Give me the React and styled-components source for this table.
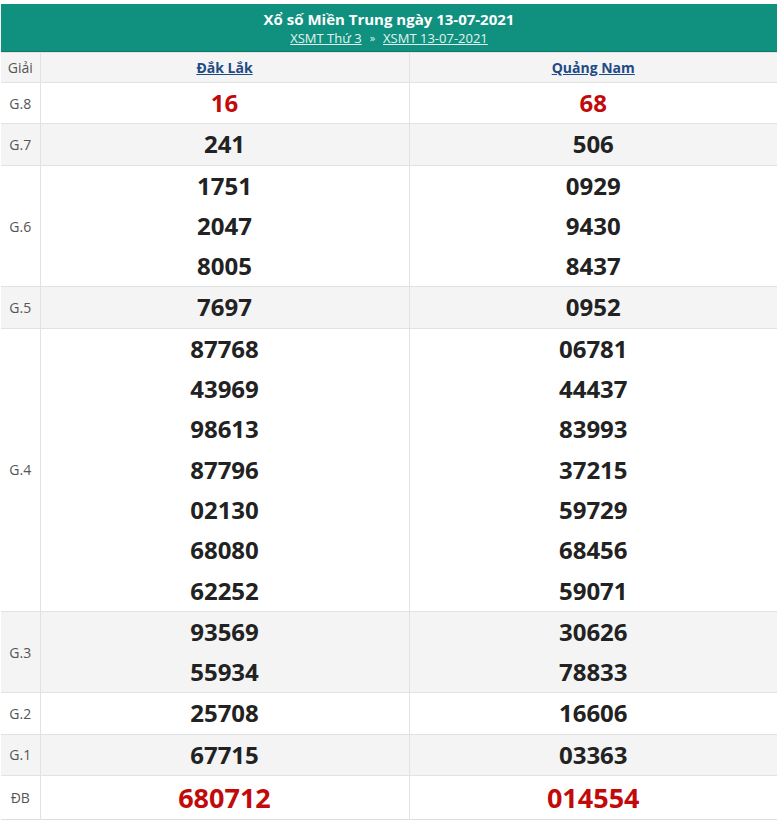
import React from 'react';
import styled, { createGlobalStyle } from 'styled-components';

const Global = createGlobalStyle`
    body {
        margin: 0;
        background: #ffffff;
        font-family: "Open Sans", "Noto Sans", sans-serif;
    }
`;

const Wrap = styled.div`
    width: 776px;
    margin: 4px 0 0 1px;
`;

const Head = styled.div`
    height: 48px;
    background-color: #10907e;
    border-bottom: 1px solid #0c7a6a;
    box-sizing: border-box;
    display: flex;
    flex-direction: column;
    align-items: center;
    justify-content: center;
    color: #ffffff;
`;

const Title = styled.h2`
    margin: 0;
    font-size: 15px;
    font-weight: 700;
    line-height: 20px;
`;

const Crumbs = styled.div`
    font-size: 13px;
    line-height: 18px;
    color: #e4f3f0;
    display: flex;
    gap: 8px;
    align-items: center;
`;

const CrumbLink = styled.a`
    color: #e4f3f0;
    text-decoration: underline;
`;

const Sep = styled.span`
    font-size: 11px;
`;

const Table = styled.table`
    width: 100%;
    border-collapse: collapse;
    table-layout: fixed;
    border-bottom: 1px solid #dedede;
`;

const Col = styled.col`
    width: ${p => p.$w}px;
`;

const Row = styled.tr`
    background-color: ${p => (p.$shade ? '#f4f4f4' : '#ffffff')};
    border-top: 1px solid #e2e2e2;
`;

const Label = styled.td`
    text-align: center;
    font-size: 14px;
    font-weight: 400;
    color: #555555;
    padding: 0;
    border-right: 1px solid #e2e2e2;
`;

const HeadCell = styled.th`
    height: 29px;
    padding: 0;
    font-size: 14px;
    font-weight: 700;
    text-align: center;
    border-right: 1px solid #e2e2e2;
    &:last-child {
        border-right: none;
    }
`;

const Province = styled.a`
    color: #224a86;
    text-decoration: underline;
`;

const Cell = styled.td`
    padding: 0;
    text-align: center;
    border-right: 1px solid #e2e2e2;
    &:last-child {
        border-right: none;
    }
`;

const Num = styled.div`
    font-size: ${p => (p.$big ? '27px' : '24px')};
    line-height: ${p => (p.$big ? '43px' : '40.3px')};
    font-weight: 700;
    color: ${p => (p.$red ? '#c20a0a' : '#222222')};
`;

const prizes = [
    { label: 'G.8', a: ['16'], b: ['68'], red: true },
    { label: 'G.7', a: ['241'], b: ['506'] },
    { label: 'G.6', a: ['1751', '2047', '8005'], b: ['0929', '9430', '8437'] },
    { label: 'G.5', a: ['7697'], b: ['0952'] },
    {
        label: 'G.4',
        a: ['87768', '43969', '98613', '87796', '02130', '68080', '62252'],
        b: ['06781', '44437', '83993', '37215', '59729', '68456', '59071'],
    },
    { label: 'G.3', a: ['93569', '55934'], b: ['30626', '78833'] },
    { label: 'G.2', a: ['25708'], b: ['16606'] },
    { label: 'G.1', a: ['67715'], b: ['03363'] },
    { label: 'ĐB', a: ['680712'], b: ['014554'], red: true, big: true },
];

export default function App() {
    return (
        <Wrap>
            <Global />
            <Head>
                <Title>Xổ số Miền Trung ngày 13-07-2021</Title>
                <Crumbs>
                    <CrumbLink href="#">XSMT Thứ 3</CrumbLink>
                    <Sep>»</Sep>
                    <CrumbLink href="#">XSMT 13-07-2021</CrumbLink>
                </Crumbs>
            </Head>
            <Table>
                <colgroup>
                    <Col $w={39} />
                    <Col $w={369} />
                    <Col $w={368} />
                </colgroup>
                <thead>
                    <Row $shade>
                        <Label as="th">Giải</Label>
                        <HeadCell><Province href="#">Đắk Lắk</Province></HeadCell>
                        <HeadCell><Province href="#">Quảng Nam</Province></HeadCell>
                    </Row>
                </thead>
                <tbody>
                    {prizes.map((p, i) => (
                        <Row key={p.label} $shade={i % 2 === 1}>
                            <Label>{p.label}</Label>
                            <Cell>
                                {p.a.map((n, j) => (
                                    <Num key={j} $red={p.red} $big={p.big}>{n}</Num>
                                ))}
                            </Cell>
                            <Cell>
                                {p.b.map((n, j) => (
                                    <Num key={j} $red={p.red} $big={p.big}>{n}</Num>
                                ))}
                            </Cell>
                        </Row>
                    ))}
                </tbody>
            </Table>
        </Wrap>
    );
}
